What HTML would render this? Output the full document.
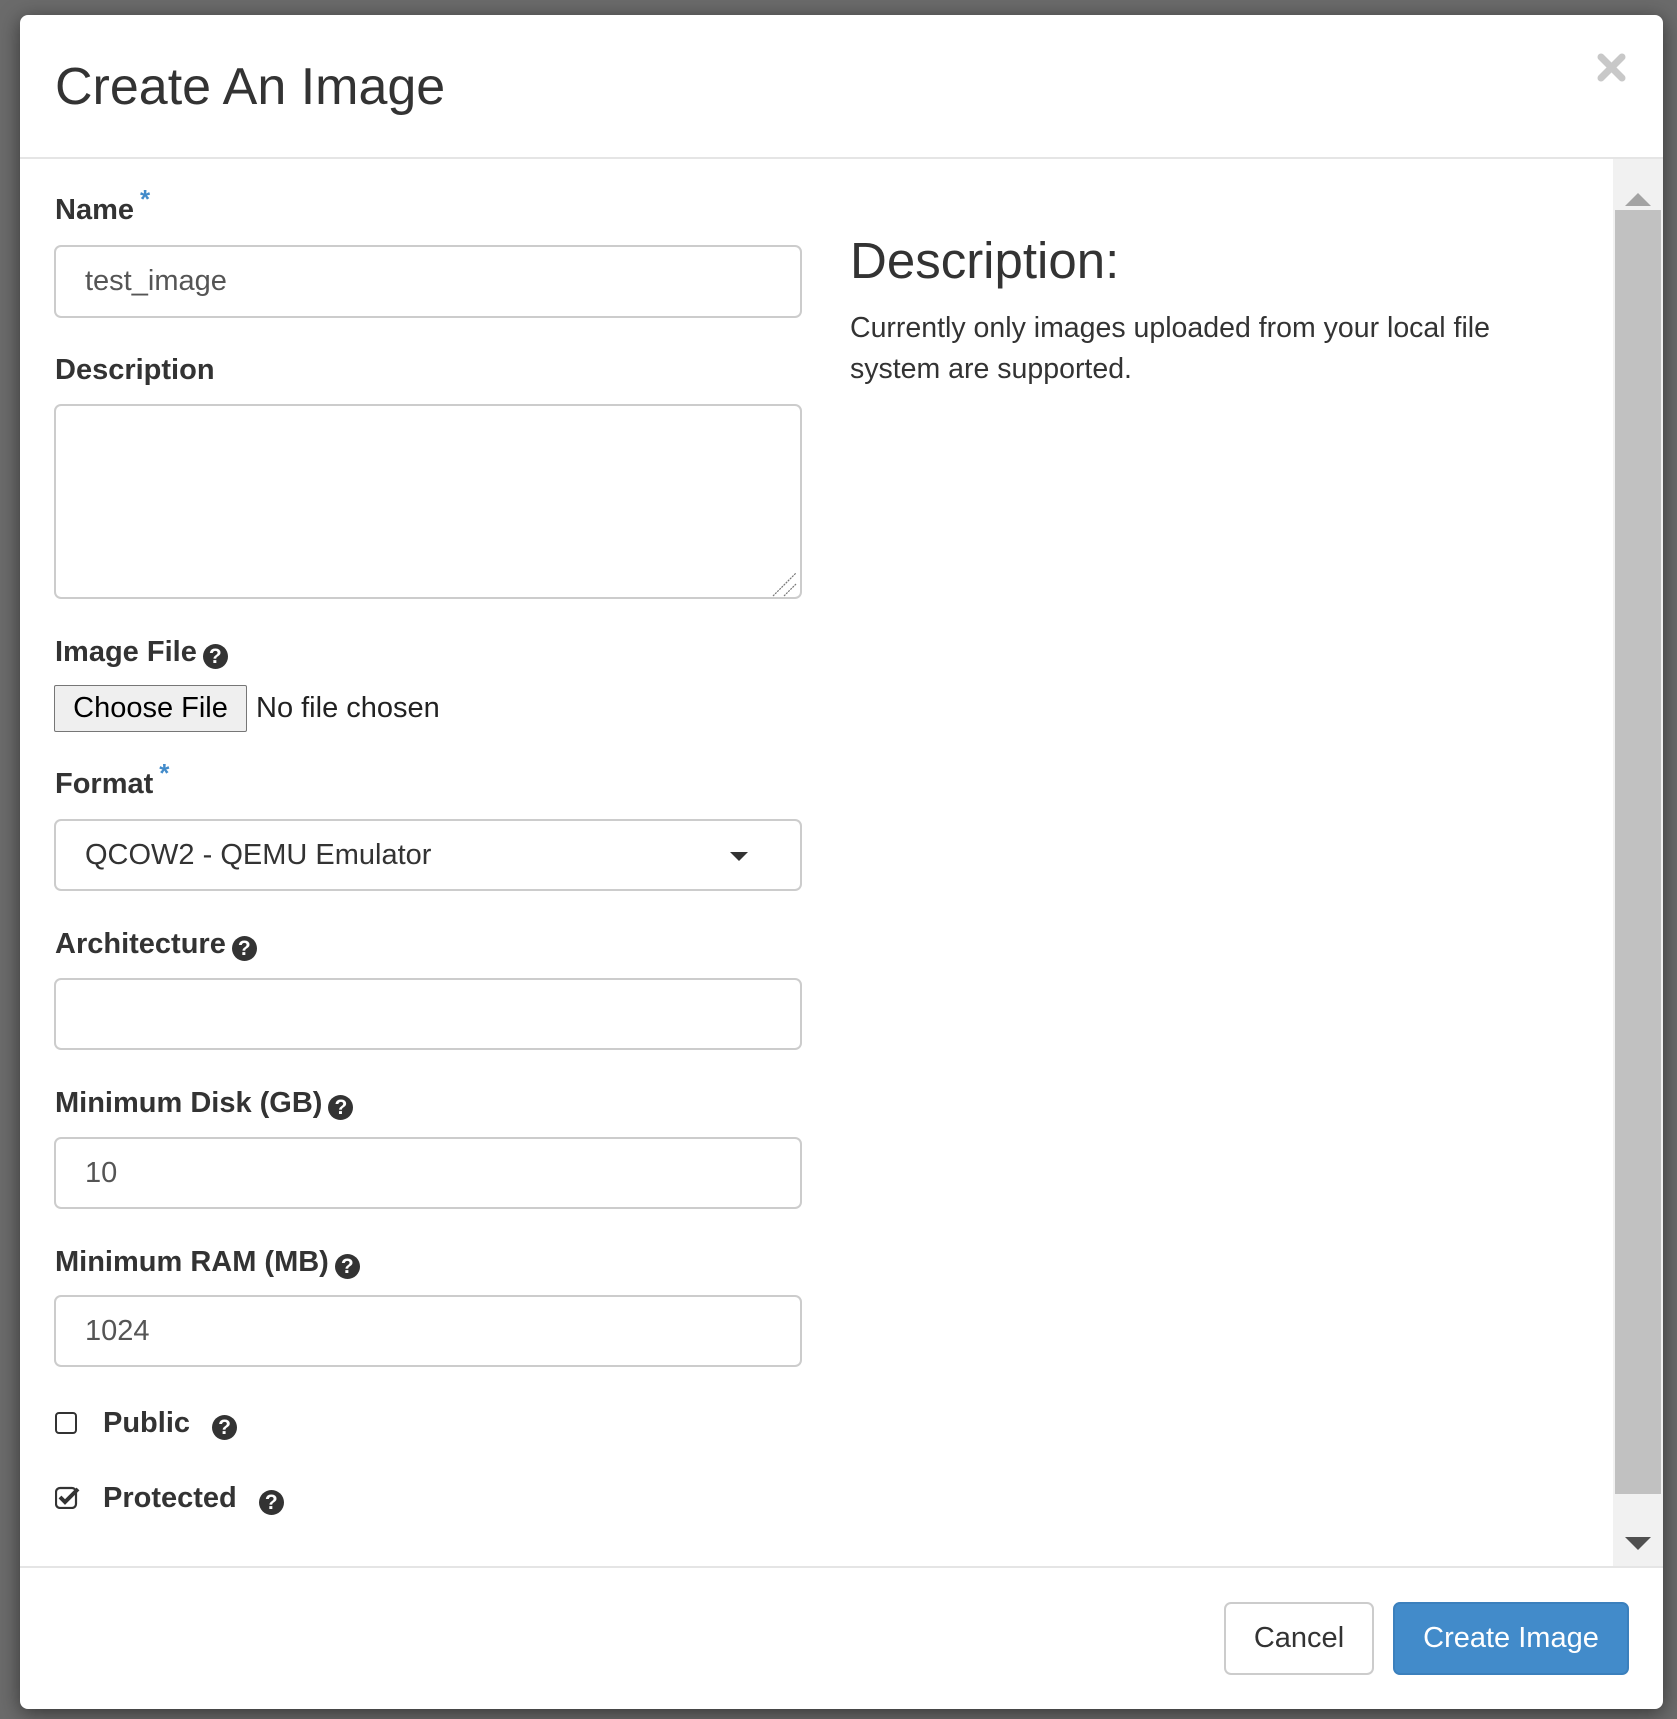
<!DOCTYPE html>
<html><head><meta charset="utf-8"><style>
*{box-sizing:border-box;margin:0;padding:0}
body{width:1677px;height:1719px;background:#6b6b6b;font-family:"Liberation Sans",Arial,sans-serif;color:#333;position:relative;overflow:hidden}
.modal{position:absolute;left:20px;top:15px;width:1643px;height:1694px;background:#fff;border-radius:8px;box-shadow:0 4px 20px rgba(0,0,0,.5);overflow:hidden}
.a{position:absolute;white-space:nowrap}
.lbl{font-size:29px;font-weight:bold;line-height:36px;left:35px}
.inp{position:absolute;left:34px;width:748px;border:2px solid #ccc;border-radius:7px;font-size:29px;padding-left:29px;color:#555}
.star{color:#428bca;font-size:26px;vertical-align:super;line-height:0;margin-left:6px}
.q{display:inline-block;width:25px;height:25px;border-radius:50%;background:#333;color:#fff;font-size:21px;font-weight:bold;line-height:25px;text-align:center;vertical-align:-2px;margin-left:6px}
</style></head><body>
<div class="modal">
 <div class="a" style="left:35px;top:46px;font-size:52px;line-height:52px;color:#333">Create An Image</div>
 <svg class="a" style="left:1577px;top:38px" width="29" height="29" viewBox="0 0 29 29"><path d="M4 4L25 25M25 4L4 25" stroke="#c8c8c8" stroke-width="7" stroke-linecap="round"/></svg>
 <div class="a" style="left:0;top:142px;width:1643px;height:2px;background:#e5e5e5"></div>
 <!-- scrollbar -->
 <div class="a" style="left:1593px;top:144px;width:50px;height:1407px;background:#f1f1f1"></div>
 <div class="a" style="left:1595px;top:195px;width:46px;height:1284px;background:#c1c1c1"></div>
 <svg class="a" style="left:1605px;top:177px" width="26" height="14"><path d="M0 14L13 1L26 14Z" fill="#a3a3a3"/></svg>
 <svg class="a" style="left:1605px;top:1522px" width="26" height="14"><path d="M0 0L26 0L13 13Z" fill="#505050"/></svg>

 <div class="a lbl" style="top:177px">Name<span class="star">*</span></div>
 <div class="inp" style="top:230px;height:73px;line-height:69px">test_image</div>
 <div class="a lbl" style="top:337px">Description</div>
 <div class="inp" style="top:389px;height:195px"></div>
 <svg class="a" style="left:752px;top:558px" width="26" height="24"><path d="M1 23L24 0M12 23L24 11" stroke="#777" stroke-width="1.2" stroke-dasharray="2 1"/></svg>
 <div class="a lbl" style="top:619px">Image File<span class="q">?</span></div>
 <div class="a" style="left:34px;top:670px;width:193px;height:47px;border:1px solid #767676;border-radius:2px;background:#efefef;font-size:29px;line-height:45px;text-align:center;color:#000">Choose File</div>
 <div class="a" style="left:236px;top:670px;font-size:29px;line-height:47px;color:#222">No file chosen</div>
 <div class="a lbl" style="top:751px">Format<span class="star">*</span></div>
 <div class="inp" style="top:804px;height:72px;line-height:68px;color:#333">QCOW2 - QEMU Emulator</div>
 <svg class="a" style="left:710px;top:837px" width="18" height="9"><path d="M0 0H18L9 9Z" fill="#333"/></svg>
 <div class="a lbl" style="top:911px">Architecture<span class="q">?</span></div>
 <div class="inp" style="top:963px;height:72px"></div>
 <div class="a lbl" style="top:1070px">Minimum Disk (GB)<span class="q">?</span></div>
 <div class="inp" style="top:1122px;height:72px;line-height:68px">10</div>
 <div class="a lbl" style="top:1229px">Minimum RAM (MB)<span class="q">?</span></div>
 <div class="inp" style="top:1280px;height:72px;line-height:68px">1024</div>
 <div class="a" style="left:35px;top:1397px;width:22px;height:22px;border:2px solid #333;border-radius:4px"></div>
 <div class="a lbl" style="left:83px;top:1390px">Public <span class="q" style="margin-left:14px">?</span></div>
 <svg class="a" style="left:35px;top:1470px" width="26" height="24"><rect x="1" y="3" width="20" height="20" rx="4" fill="none" stroke="#333" stroke-width="2.2"/><path d="M5 12L10 17L23 4" fill="none" stroke="#333" stroke-width="4"/></svg>
 <div class="a lbl" style="left:83px;top:1465px">Protected <span class="q" style="margin-left:14px">?</span></div>

 <div class="a" style="left:830px;top:216px;font-size:51px;line-height:60px">Description:</div>
 <div class="a" style="left:830px;top:293px;font-size:28.5px;line-height:41px">Currently only images uploaded from your local file<br>system are supported.</div>

 <div class="a" style="left:0;top:1551px;width:1643px;height:2px;background:#e5e5e5"></div>
 <div class="a" style="left:1204px;top:1587px;width:150px;height:73px;border:2px solid #ccc;border-radius:7px;font-size:29px;line-height:69px;text-align:center;color:#333">Cancel</div>
 <div class="a" style="left:1373px;top:1587px;width:236px;height:73px;background:#428bca;border:2px solid #3b80bd;border-radius:7px;font-size:29px;line-height:69px;text-align:center;color:#fff">Create Image</div>
</div>
</body></html>
